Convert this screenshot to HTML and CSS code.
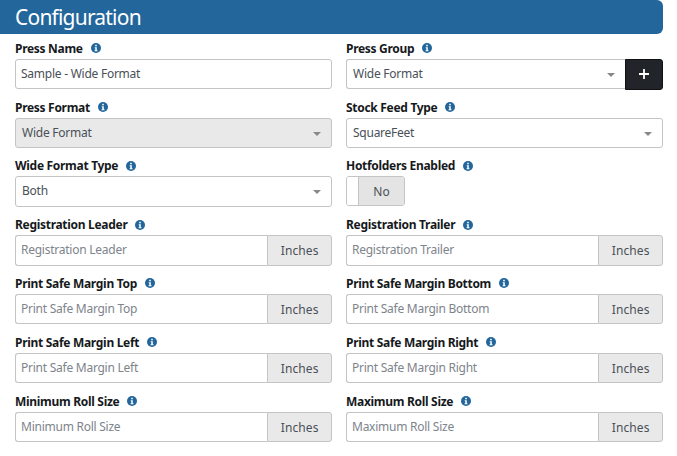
FILE: index.html
```html
<!DOCTYPE html>
<html lang="en">
<head>
<meta charset="utf-8">
<title>Configuration</title>
<link rel="stylesheet" href="styles.css">
</head>
<body>
<svg class="sprite" width="0" height="0" aria-hidden="true"><defs><symbol id="info" viewBox="0 0 10 10"><circle cx="5" cy="5" r="5" fill="#22669b"/><rect x="4.2" y="1.8" width="1.6" height="1.5" fill="#fff"/><path d="M3.7 4.2h2.1v3h.7v1H3.6v-1h.7v-2h-.6z" fill="#fff"/></symbol></defs></svg>
<main class="panel">
  <h1 class="title">Configuration</h1>
  <div class="form">
    <div class="field"><label class="label">Press Name <svg class="info"><use href="#info"/></svg></label>
      <div class="control text">Sample - Wide Format</div></div>
    <div class="field"><label class="label">Press Group <svg class="info"><use href="#info"/></svg></label>
      <div class="group"><div class="control select joined">Wide Format<span class="caret"></span></div><button class="add" aria-label="Add"><svg class="plus" viewBox="0 0 10 10"><path d="M5 0v10M0 5h10"/></svg></button></div></div>

    <div class="field"><label class="label">Press Format <svg class="info"><use href="#info"/></svg></label>
      <div class="control select disabled">Wide Format<span class="caret"></span></div></div>
    <div class="field"><label class="label">Stock Feed Type <svg class="info"><use href="#info"/></svg></label>
      <div class="control select">SquareFeet<span class="caret"></span></div></div>

    <div class="field"><label class="label">Wide Format Type <svg class="info"><use href="#info"/></svg></label>
      <div class="control select">Both<span class="caret"></span></div></div>
    <div class="field"><label class="label">Hotfolders Enabled <svg class="info"><use href="#info"/></svg></label>
      <div class="toggle"><span class="knob"></span><span class="state">No</span></div></div>

    <div class="field"><label class="label">Registration Leader <svg class="info"><use href="#info"/></svg></label>
      <div class="group"><div class="control joined ph">Registration Leader</div><span class="unit">Inches</span></div></div>
    <div class="field"><label class="label">Registration Trailer <svg class="info"><use href="#info"/></svg></label>
      <div class="group"><div class="control joined ph">Registration Trailer</div><span class="unit">Inches</span></div></div>

    <div class="field"><label class="label">Print Safe Margin Top <svg class="info"><use href="#info"/></svg></label>
      <div class="group"><div class="control joined ph">Print Safe Margin Top</div><span class="unit">Inches</span></div></div>
    <div class="field"><label class="label">Print Safe Margin Bottom <svg class="info"><use href="#info"/></svg></label>
      <div class="group"><div class="control joined ph">Print Safe Margin Bottom</div><span class="unit">Inches</span></div></div>

    <div class="field"><label class="label">Print Safe Margin Left <svg class="info"><use href="#info"/></svg></label>
      <div class="group"><div class="control joined ph">Print Safe Margin Left</div><span class="unit">Inches</span></div></div>
    <div class="field"><label class="label">Print Safe Margin Right <svg class="info"><use href="#info"/></svg></label>
      <div class="group"><div class="control joined ph">Print Safe Margin Right</div><span class="unit">Inches</span></div></div>

    <div class="field"><label class="label">Minimum Roll Size <svg class="info"><use href="#info"/></svg></label>
      <div class="group"><div class="control joined ph">Minimum Roll Size</div><span class="unit">Inches</span></div></div>
    <div class="field"><label class="label">Maximum Roll Size <svg class="info"><use href="#info"/></svg></label>
      <div class="group"><div class="control joined ph">Maximum Roll Size</div><span class="unit">Inches</span></div></div>
  </div>
</main>
</body>
</html>
```
FILE: styles.css
```css
* { box-sizing: border-box; }
html, body { margin: 0; padding: 0; background: #fff; }
body { width: 677px; height: 456px; overflow: hidden; font-family: "Noto Sans", sans-serif; color: #212529; }
.sprite { position: absolute; }
.panel { width: 663px; }
.title { margin: 0; height: 34px; padding: 0 0 0 15px; background: #22669b; color: #fff; font-size: 21px; font-weight: 400; letter-spacing: -0.8px; line-height: 35px; border-radius: 0 6px 6px 0; }
.form { display: grid; grid-template-columns: 317px 317px; column-gap: 14px; row-gap: 10.3px; padding: 6.8px 0 0 15px; }
.field { display: flex; flex-direction: column; min-width: 0; }
.label { display: flex; align-items: center; height: 18px; padding-bottom: 3px; font-size: 12px; font-weight: 700; letter-spacing: -0.3px; color: #16191c; white-space: pre; }
.info { width: 10px; height: 10px; margin-left: 5px; }
.control { height: 30.5px; flex: 1; min-width: 0; border: 1px solid #c4c4c4; border-radius: 3px; padding: 0 5px; font-size: 12px; letter-spacing: -0.25px; line-height: 28.5px; color: #495057; background: #fff; position: relative; white-space: nowrap; }
.select { padding-left: 6px; }
.ph { color: #7d848b; }
.disabled { background: #e9e9e9; }
.caret { position: absolute; right: 10px; top: 13px; border-style: solid; border-width: 4px 4px 0; border-color: #888 transparent transparent; }
.group { display: flex; height: 30.5px; }
.joined { border-radius: 3px 0 0 3px; border-right: 0; }
.add { flex: none; width: 38px; height: 31px; padding: 0; display: flex; align-items: center; justify-content: center; border: 1px solid #111; border-radius: 0 3px 3px 0; background: #212529; }
.plus { width: 10px; height: 10px; stroke: #fff; stroke-width: 1.8; fill: none; }
.unit { flex: none; width: 64.6px; padding-top: 1px; display: flex; align-items: center; justify-content: center; border: 1px solid #c4c4c4; border-radius: 0 3px 3px 0; background: #e9e9e9; font-size: 12px; letter-spacing: 0.1px; color: #495057; }
.toggle { display: flex; width: 59px; height: 30px; border: 1px solid #c4c4c4; border-radius: 3px; overflow: hidden; }
.knob { width: 12px; background: #fff; border-right: 1px solid #c4c4c4; }
.state { flex: 1; display: flex; align-items: center; justify-content: center; background: #e4e4e4; font-size: 12px; color: #495057; }
```
